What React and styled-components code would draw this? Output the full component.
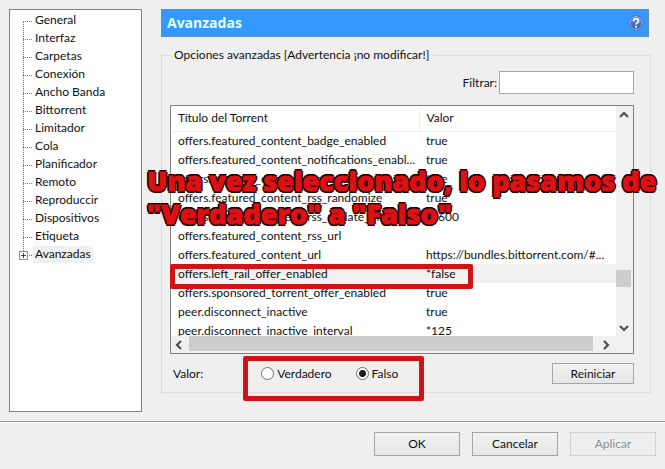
import React, { useState } from 'react';
import styled, { createGlobalStyle, css } from 'styled-components';

const sections = [
  'General',
  'Interfaz',
  'Carpetas',
  'Conexión',
  'Ancho Banda',
  'Bittorrent',
  'Limitador',
  'Cola',
  'Planificador',
  'Remoto',
  'Reproduccir',
  'Dispositivos',
  'Etiqueta',
  'Avanzadas',
];

const options = [
  { name: 'offers.featured_content_badge_enabled', value: 'true' },
  { name: 'offers.featured_content_notifications_enabl...', value: 'true' },
  { name: 'offers.featured_content_rss_enabled', value: 'true' },
  { name: 'offers.featured_content_rss_randomize', value: 'true' },
  { name: 'offers.featured_content_rss_update_interval', value: '*3600' },
  { name: 'offers.featured_content_rss_url', value: '' },
  { name: 'offers.featured_content_url', value: 'https://bundles.bittorrent.com/#...' },
  { name: 'offers.left_rail_offer_enabled', value: '*false' },
  { name: 'offers.sponsored_torrent_offer_enabled', value: 'true' },
  { name: 'peer.disconnect_inactive', value: 'true' },
  { name: 'peer.disconnect_inactive_interval', value: '*125' },
];

const arrows = {
  up: 'M2 8 L6 4 L10 8',
  down: 'M2 4 L6 8 L10 4',
  left: 'M8 2 L4 6 L8 10',
  right: 'M4 2 L8 6 L4 10',
};

const Arrow = ({ dir }) => (
  <svg width="12" height="12" viewBox="0 0 12 12" aria-hidden="true">
    <path d={arrows[dir]} fill="none" stroke="#505050" strokeWidth="2.2" />
  </svg>
);

const HelpIcon = () => (
  <svg width="16" height="16" viewBox="0 0 16 16" aria-hidden="true">
    <defs>
      <linearGradient id="help" x1="0" y1="0" x2="0" y2="1">
        <stop offset="0" stopColor="#6f94dc" />
        <stop offset="1" stopColor="#2c56b4" />
      </linearGradient>
    </defs>
    <circle cx="8" cy="8" r="7.6" fill="#3a62b4" />
    <circle cx="8" cy="8" r="6.4" fill="url(#help)" stroke="#a9c4ee" strokeWidth="0.9" />
    <path
      d="M5.6 6.2 C5.6 3.2 10.6 3.2 10.6 6 C10.6 7.8 8.1 7.8 8.1 9.6"
      fill="none"
      stroke="#fff"
      strokeWidth="1.7"
    />
    <circle cx="8.1" cy="11.8" r="1.1" fill="#fff" />
  </svg>
);

const App = () => {
  const [section, setSection] = useState('Avanzadas');
  const [selected, setSelected] = useState('offers.left_rail_offer_enabled');
  const [value, setValue] = useState('false');
  const [filter, setFilter] = useState('');

  const visible = options.filter((o) => o.name.includes(filter));

  return (
    <>
      <GlobalStyle />
      <Dialog>
        <Body>
          <Tree>
            {sections.map((name) => (
              <TreeItem key={name} $last={name === 'Avanzadas'}>
                {name === 'Avanzadas' && (
                  <Expander viewBox="0 0 9 9" aria-hidden="true">
                    <rect x="0.5" y="0.5" width="8" height="8" fill="#fff" stroke="#919191" />
                    <path d="M2 4.5 H7 M4.5 2 V7" stroke="#404040" />
                  </Expander>
                )}
                <TreeButton type="button" $active={name === section} onClick={() => setSection(name)}>
                  {name}
                </TreeButton>
              </TreeItem>
            ))}
          </Tree>

          <Main>
            <Header>
              <h1>Avanzadas</h1>
              <HelpButton type="button" aria-label="Ayuda">
                <HelpIcon />
              </HelpButton>
            </Header>

            <Group>
              <legend>Opciones avanzadas [Advertencia ¡no modificar!]</legend>
              <FilterRow>
                <label htmlFor="filter">Filtrar:</label>
                <input id="filter" type="text" value={filter} onChange={(e) => setFilter(e.target.value)} />
              </FilterRow>

              <ListBox>
                <Viewport>
                  <Table>
                    <thead>
                      <tr>
                        <th scope="col">Título del Torrent</th>
                        <th scope="col">Valor</th>
                      </tr>
                    </thead>
                    <tbody>
                      {visible.map((o) => (
                        <Row key={o.name} $active={o.name === selected} onClick={() => setSelected(o.name)}>
                          <td>{o.name}</td>
                          <td>{o.value}</td>
                        </Row>
                      ))}
                    </tbody>
                  </Table>
                </Viewport>
                <VScroll>
                  <ScrollButton type="button" aria-label="Subir">
                    <Arrow dir="up" />
                  </ScrollButton>
                  <VThumb />
                  <ScrollButton type="button" aria-label="Bajar">
                    <Arrow dir="down" />
                  </ScrollButton>
                </VScroll>
                <HScroll>
                  <ScrollButton type="button" aria-label="Izquierda">
                    <Arrow dir="left" />
                  </ScrollButton>
                  <HThumb />
                  <ScrollButton type="button" aria-label="Derecha">
                    <Arrow dir="right" />
                  </ScrollButton>
                </HScroll>
                <RowMark />
                <Caption>
                  Una vez seleccionado, lo pasamos de
                  <br />
                  "Verdadero" a "Falso"
                </Caption>
              </ListBox>

              <ValueRow>
                <span>Valor:</span>
                <Radios role="radiogroup" aria-label="Valor">
                  <RadioLabel>
                    <input type="radio" name="value" checked={value === 'true'} onChange={() => setValue('true')} />
                    Verdadero
                  </RadioLabel>
                  <RadioLabel>
                    <input type="radio" name="value" checked={value === 'false'} onChange={() => setValue('false')} />
                    Falso
                  </RadioLabel>
                  <RadioMark />
                </Radios>
                <ResetButton type="button">Reiniciar</ResetButton>
              </ValueRow>
            </Group>
          </Main>
        </Body>

        <Footer>
          <Button type="button">OK</Button>
          <Button type="button">Cancelar</Button>
          <Button type="button" disabled>
            Aplicar
          </Button>
        </Footer>
      </Dialog>
    </>
  );
};

export default App;

// Styling
const GlobalStyle = createGlobalStyle`
  * {
    box-sizing: border-box;
  }
  body {
    margin: 0;
    background: #efefef;
  }
  body, button, input {
    font-family: Lato, 'Open Sans', sans-serif;
    font-size: 12px;
    line-height: 18px;
    color: #111;
  }
`;

const Dialog = styled.div`
  min-height: 100vh;
  background: #efefef;
`;

const Body = styled.div`
  display: grid;
  grid-template-columns: 133px 1fr;
  gap: 19px;
  padding: 9px 14px 9px 9px;
  border-bottom: 1px solid #9a9a9a;
`;

const Tree = styled.ul`
  margin: 0;
  padding: 2px 0 0 13px;
  list-style: none;
  background: #fff;
  border: 1px solid #828282;
`;

const TreeItem = styled.li`
  position: relative;
  display: flex;
  align-items: flex-start;
  height: 18px;
  padding-left: 10px;

  &::before {
    content: '';
    position: absolute;
    left: 0;
    top: 9px;
    width: 9px;
    border-top: 1px dotted #777;
  }
  &::after {
    content: '';
    position: absolute;
    left: 0;
    top: 9px;
    height: 18px;
    border-left: 1px dotted #777;
    display: ${({ $last }) => ($last ? 'none' : 'block')};
  }
`;

const Expander = styled.svg`
  position: absolute;
  z-index: 1;
  left: -4px;
  top: 5px;
  width: 9px;
  height: 9px;
`;

const TreeButton = styled.button`
  border: none;
  padding: 0 2px 2px;
  line-height: 15px;
  background: ${({ $active }) => ($active ? '#f0f0f0' : 'transparent')};
`;

const Main = styled.main`
  min-width: 0;
  padding-bottom: 19px;
`;

const Header = styled.header`
  display: flex;
  align-items: center;
  justify-content: space-between;
  height: 28px;
  margin-right: 2px;
  padding: 0 4px 0 5px;
  background: #3399ff;
  border: 1px solid #6a8cb4;

  h1 {
    margin: 0;
    font-family: 'Open Sans', sans-serif;
    font-size: 14px;
    font-weight: 700;
    color: #e8ffff;
  }
`;

const HelpButton = styled.button`
  display: flex;
  border: none;
  padding: 0;
  background: transparent;
`;

const Group = styled.fieldset`
  min-width: 0;
  margin: 9px 0 0;
  padding: 7px 16px 8px 8px;
  border: 1px solid #dcdcdc;

  legend {
    padding: 0 4px;
  }
`;

const FilterRow = styled.div`
  display: flex;
  align-items: center;
  justify-content: flex-end;
  gap: 2px;
  margin-bottom: 11px;

  input {
    width: 135px;
    height: 23px;
    padding: 0 4px;
    background: #fff;
    border: 1px solid #a8a8a8;
  }
`;

const ListBox = styled.div`
  position: relative;
  display: grid;
  grid-template-columns: 1fr 17px;
  grid-template-rows: 230px 17px;
  background: #fff;
  border: 1px solid #828282;
`;

const Viewport = styled.div`
  overflow: hidden;
`;

const Table = styled.table`
  width: 100%;
  table-layout: fixed;
  border-collapse: collapse;

  th,
  td {
    padding: 0 0 0 7px;
    text-align: left;
    font-weight: 400;
    white-space: nowrap;
  }
  th {
    height: 25px;
    border-bottom: 1px solid #f0f0f0;
  }
  th:first-child {
    width: 248px;
    border-right: 1px solid #f0f0f0;
  }
  td {
    height: 19px;
  }
`;

const Row = styled.tr`
  background: ${({ $active }) => ($active ? '#f0f0f0' : '#fff')};
`;

const VScroll = styled.div`
  display: flex;
  flex-direction: column;
  align-items: flex-start;
  background: #f0f0f0;
`;

const HScroll = styled.div`
  grid-column: 1 / -1;
  display: flex;
  background: #f0f0f0;
`;

const ScrollButton = styled.button`
  display: flex;
  align-items: center;
  justify-content: center;
  width: 15px;
  height: 17px;
  padding: 0;
  border: none;
  background: transparent;
`;

const VThumb = styled.div`
  width: 15px;
  height: 17px;
  margin: auto 0 32px;
  background: #cdcdcd;
`;

const HThumb = styled.div`
  flex: 1;
  height: 15px;
  margin: 0 5px 0 3px;
  background: #cdcdcd;

  & + button {
    margin-right: 20px;
  }
`;

const mark = css`
  position: absolute;
  border: 5px solid #d01317;
  border-radius: 2px;
  pointer-events: none;
`;

const RowMark = styled.div`
  ${mark}
  left: -1px;
  top: 158px;
  width: 303px;
  height: 25px;
`;

const Caption = styled.p`
  position: absolute;
  left: -24px;
  top: 58px;
  margin: 0;
  font-family: 'Open Sans', Lato, sans-serif;
  font-size: 27px;
  font-weight: 800;
  line-height: 33px;
  white-space: nowrap;
  color: #dd1114;
  -webkit-text-stroke: 1px #dd1114;
  text-shadow:
    2px 0 #1a0000,
    -2px 0 #1a0000,
    0 2px #1a0000,
    0 -2px #1a0000,
    1px 2px #1a0000,
    -1px 2px #1a0000,
    1px -2px #1a0000,
    -1px -2px #1a0000;
  pointer-events: none;
`;

const ValueRow = styled.div`
  display: flex;
  align-items: center;
  margin-top: 9px;
  padding-left: 3px;
`;

const Radios = styled.div`
  position: relative;
  display: flex;
  gap: 24px;
  margin-left: 58px;
`;

const RadioLabel = styled.label`
  display: flex;
  align-items: center;
  gap: 3px;

  input {
    appearance: none;
    width: 13px;
    height: 13px;
    margin: 0;
    background: #fff;
    border: 1px solid #707070;
    border-radius: 50%;
  }
  input:checked {
    background: radial-gradient(circle, #1c1c1c 3px, #fff 4px);
  }
`;

const RadioMark = styled.div`
  ${mark}
  left: -18px;
  top: -9px;
  width: 181px;
  height: 45px;
`;

const Button = styled.button`
  width: 86px;
  height: 24px;
  padding: 0;
  background: linear-gradient(#f2f2f2, #e6e6e6);
  border: 1px solid #a6a6a6;

  &:disabled {
    color: #8e8e8e;
    background: #efefef;
    border-color: #d2d2d2;
  }
`;

const ResetButton = styled(Button)`
  width: 82px;
  height: 21px;
  line-height: 16px;
  margin-left: auto;
`;

const Footer = styled.footer`
  display: flex;
  justify-content: flex-end;
  gap: 12px;
  padding: 9px 9px 13px;
  border-top: 1px solid #fafafa;
`;
